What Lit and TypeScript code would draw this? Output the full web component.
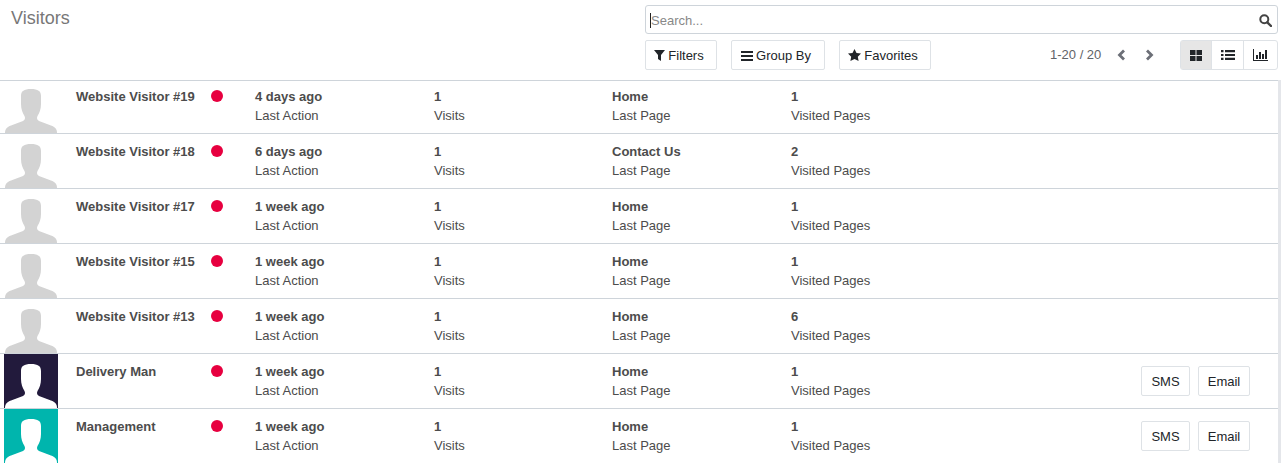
import { LitElement, html, css, svg } from "lit";
import { customElement } from "lit/decorators.js";

const rows = [
  ["Website Visitor #19", "4 days ago", "1", "Home", "1", "", false],
  ["Website Visitor #18", "6 days ago", "1", "Contact Us", "2", "", false],
  ["Website Visitor #17", "1 week ago", "1", "Home", "1", "", false],
  ["Website Visitor #15", "1 week ago", "1", "Home", "1", "", false],
  ["Website Visitor #13", "1 week ago", "1", "Home", "6", "", false],
  ["Delivery Man", "1 week ago", "1", "Home", "1", "#221a3c", true],
  ["Management", "1 week ago", "1", "Home", "1", "#00b5ad", true],
] as const;

const person = (bg: string) => html`<svg class="avatar" viewBox="0 0 54 54" width="54" height="54">
  ${bg ? svg`<rect width="54" height="54" fill="${bg}"/>` : ""}
  <path fill="${bg ? "#fff" : "#d3d3d3"}" d="M1 54C1 50 3 48 7 46.500L19 42C21 41 21.500 39 20.500 37C18.500 34 17 30 17 25V17C17 12 20 10 27 10C34 10 37 12 37 17V25C37 30 35.500 34 33.500 37C32.500 39 33 41 35 42L47 46.500C51 48 53 50 53 54Z"/>
</svg>`;

@customElement("app-root")
export class AppRoot extends LitElement {
  static styles = css`
    :host { display: block; height: 463px; overflow: hidden; font-family: "Liberation Sans", Arial, sans-serif; font-size: 13px; color: #4c4c4c; background: #fff; position: relative; }
    .head { display: flex; width: 1278px; height: 81px; box-sizing: border-box; border-bottom: 1px solid #ced4da; }
    .title { width: 645px; padding: 8px 0 0 11px; box-sizing: border-box; font-size: 18px; line-height: 21px; color: #777; }
    .tools { width: 633px; }
    .search { height: 29px; margin-top: 5px; box-sizing: border-box; border: 1px solid #ced4da; border-radius: 3px; display: flex; align-items: center; justify-content: space-between; padding: 1px 5px 0 5px; color: #888; line-height: 15px; }
    .placeholder { box-shadow: -1px 0 0 #222; height: 15px; line-height: 15px; }
    .search svg { color: #444; }
    .bar { display: flex; align-items: flex-start; margin-top: 6px; }
    .btn { height: 30px; box-sizing: border-box; border: 1px solid #dee2e6; border-radius: 2px; display: flex; align-items: center; justify-content: center; gap: 3px; background: #fff; color: #212529; }
    .f { width: 72px; margin-right: 14px; padding-right: 4px; }
    .g { width: 94px; margin-right: 14px; padding-right: 4px; }
    .s { width: 92px; padding-right: 4px; }
    .pager { margin-left: 119px; line-height: 30px; color: #5f6368; width: 52px; white-space: nowrap; height: 30px; }
    .arrows { display: flex; gap: 19px; margin-left: 15px; margin-right: 26px; height: 30px; align-items: center; color: #6c6f77; }
    .views { display: grid; grid-template-columns: 30px 32px 34px; width: 98px; height: 30px; box-sizing: border-box; border: 1px solid #dee2e6; border-radius: 3px; }
    .views span { display: flex; align-items: center; justify-content: center; color: #212529; border-left: 1px solid #dee2e6; }
    .views span:first-child { border-left: 0; background: #e6e6e6; }
    .row { position: relative; display: grid; width: 1278px; grid-template-columns: 76px 135px 44px 179px 178px 179px 1fr; height: 55px; box-sizing: border-box; border-bottom: 1px solid #ced4da; padding-top: 8px; line-height: 19px; }
    .row.first { height: 53px; padding-top: 6px; }
    .avatar { position: absolute; left: 4px; bottom: 0; display: block; }
    .name, b { font-weight: 700; }
    .name { grid-column: 1 / 3; padding-left: 76px; }
    .dot { width: 12px; height: 12px; border-radius: 50%; background: #e7003f; margin-top: 3px; }
    .cell { display: flex; flex-direction: column; }
    .acts { position: absolute; left: 1141px; top: 12px; display: flex; gap: 8px; }
    .sms { width: 49px; } .email { width: 52px; }
    .rail { position: absolute; left: 1278px; top: 80px; width: 3px; height: 383px; background: #e4e6ea; }
  `;
  render() {
    return html`
      <div class="head">
        <div class="title">Visitors</div>
        <div class="tools">
          <div class="search"><span class="placeholder">Search...</span>
            <svg width="13" height="13" viewBox="0 0 13 13"><circle cx="5.300" cy="5.300" r="4" fill="none" stroke="currentColor" stroke-width="2"/><path d="M8.300 8.300L12 12" stroke="currentColor" stroke-width="2.400" stroke-linecap="round"/></svg></div>
          <div class="bar">
            <div class="btn f"><svg width="11" height="12" viewBox="0 0 11 12"><path fill="currentColor" d="M0 1h11L7 6v6L4 10V6Z"/></svg>Filters</div>
            <div class="btn g"><svg width="12" height="11" viewBox="0 0 12 11"><path fill="currentColor" d="M0 1h12v2H0zM0 5h12v2H0zM0 9h12v2H0z"/></svg>Group By</div>
            <div class="btn s"><svg width="13" height="12" viewBox="0 0 13 12"><path fill="currentColor" d="M6.500 0l2 4 4.500.6-3.200 3.100.8 4.300-4.100-2.100L2.400 12l.8-4.300L0 4.600 4.500 4Z"/></svg>Favorites</div>
            <div class="pager">1-20 / 20</div>
            <div class="arrows">
              <svg width="9" height="12" viewBox="0 0 9 12"><path d="M7 1.500L2.500 6 7 10.500" fill="none" stroke="currentColor" stroke-width="2.800"/></svg>
              <svg width="9" height="12" viewBox="0 0 9 12"><path d="M2 1.500L6.500 6 2 10.500" fill="none" stroke="currentColor" stroke-width="2.800"/></svg>
            </div>
            <div class="views">
              <span><svg width="12" height="11" viewBox="0 0 12 11"><path fill="currentColor" d="M0 0h5.500v5H0zM6.500 0H12v5H6.500zM0 6h5.500v5H0zM6.500 6H12v5H6.500z"/></svg></span>
              <span><svg width="14" height="10" viewBox="0 0 14 10"><path fill="currentColor" d="M0 0h2.500v2.200H0zM4 0h10v2.200H4zM0 3.900h2.500v2.200H0zM4 3.900h10v2.200H4zM0 7.800h2.500V10H0zM4 7.800h10V10H4z"/></svg></span>
              <span><svg width="15" height="12" viewBox="0 0 15 12"><path fill="currentColor" d="M0 0h1v11h14v1H0zM3 6h2v4H3zM6 3h2v7H6zM9 5h2v5H9zM12 1h2v9h-2z"/></svg></span>
            </div>
          </div>
        </div>
      </div>
      ${rows.map((r, i) => html`
        <div class="row ${i === 0 ? "first" : ""}">
          ${person(r[5])}
          <div class="name">${r[0]}</div>
          <div class="dot"></div>
          <div class="cell"><b>${r[1]}</b><span>Last Action</span></div>
          <div class="cell"><b>${r[2]}</b><span>Visits</span></div>
          <div class="cell"><b>${r[3]}</b><span>Last Page</span></div>
          <div class="cell"><b>${r[4]}</b><span>Visited Pages</span></div>
          ${r[6] ? html`<div class="acts"><div class="btn sms">SMS</div><div class="btn email">Email</div></div>` : ""}
        </div>`)}
      <div class="rail"></div>
    `;
  }
}
